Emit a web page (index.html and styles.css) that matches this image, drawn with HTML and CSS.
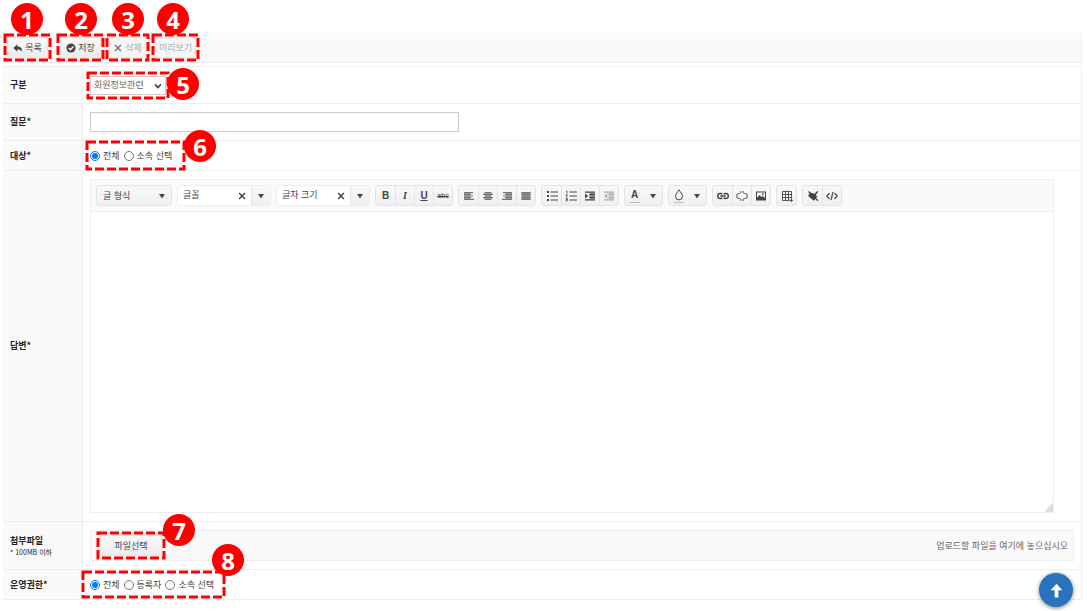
FILE: index.html
```html
<!DOCTYPE html>
<html lang="ko">
<head>
<meta charset="utf-8">
<meta name="viewport" content="width=device-width, initial-scale=1">
<title>FAQ 등록</title>
<link rel="stylesheet" href="styles.css">
</head>
<body>
<svg class="sprite" aria-hidden="true">
  <symbol id="i-reply" viewBox="0 0 12 12"><path d="M5.2 1.5v2.6C9 4.2 11 6 11 10.400 9.800 8.300 8 7.700 5.200 7.700v2.700L.5 6z"/></symbol>
  <symbol id="i-check" viewBox="0 0 12 12"><circle cx="6" cy="6" r="5.500"/><path d="M3.200 6.100l2 2 3.800-3.900" fill="none" stroke="#fff" stroke-width="1.700"/></symbol>
  <symbol id="i-x" viewBox="0 0 12 12"><path d="M2.500 2.500l7 7M9.500 2.500l-7 7" fill="none" stroke="currentColor" stroke-width="1.800"/></symbol>
  <symbol id="i-caret" viewBox="0 0 12 12"><path d="M2.500 3.500h7L6 9z"/></symbol>
  <symbol id="i-chevron" viewBox="0 0 12 12"><path d="M2.500 4L6 7.800 9.500 4" fill="none" stroke="currentColor" stroke-width="2"/></symbol>
  <symbol id="i-left" viewBox="0 0 12 12"><path d="M1 2h9v1.200H1zM1 3.700h7v1.200H1zM1 5.400h9v1.200H1zM1 7.100h7v1.200H1zM1 8.800h10V10H1z"/><path d="M1 2h6v8H1z" opacity=".5"/></symbol>
  <symbol id="i-center" viewBox="0 0 12 12"><path d="M2.500 2h7v1.200h-7zM1 3.700h10v1.200H1zM2.500 5.400h7v1.200h-7zM1 7.100h10v1.200H1zM2.500 8.800h7V10h-7z"/><path d="M3 2h6v8H3z" opacity=".5"/></symbol>
  <symbol id="i-right" viewBox="0 0 12 12"><path d="M2 2h9v1.200H2zM4 3.700h7v1.200H4zM2 5.400h9v1.200H2zM4 7.100h7v1.200H4zM1 8.800h10V10H1z"/><path d="M5 2h6v8H5z" opacity=".5"/></symbol>
  <symbol id="i-full" viewBox="0 0 12 12"><path d="M1.500 2h9v1.200h-9zM1.500 3.700h9v1.200h-9zM1.500 5.400h9v1.200h-9zM1.500 7.100h9v1.200h-9zM1.500 8.800h9V10h-9z"/><path d="M1.500 2h9v8h-9z" opacity=".6"/></symbol>
  <symbol id="i-ul" viewBox="0 0 12 12"><path d="M1 1h2v2H1zM1 5h2v2H1zM1 9h2v2H1zM4.500 1.500H12v1H4.500zM4.500 5.500H12v1H4.500zM4.500 9.500H12v1H4.500z"/></symbol>
  <symbol id="i-ol" viewBox="0 0 12 12"><path d="M4.500 1.500H12v1H4.500zM4.500 5.500H12v1H4.500zM4.500 9.500H12v1H4.500z"/><path d="M1 1h1v2.500M.7 4.700h1.600L1 6.900h1.500M.7 8.500h1.600v1H1.200h1.100v1.300H.7" fill="none" stroke="currentColor" stroke-width=".8"/></symbol>
  <symbol id="i-indent" viewBox="0 0 12 12"><path d="M1 1.500h10v1.300H1zM1 9.200h10v1.300H1zM1 3.500L4.300 6 1 8.500z"/><path d="M5.500 2.800H11v6.400H5.500z" opacity=".6"/><path d="M5.500 4h5.500v1H5.500zM5.500 7h5.500v1H5.500z"/></symbol>
  <symbol id="i-outdent" viewBox="0 0 12 12"><path d="M1 1.500h10v1.300H1zM1 9.200h10v1.300H1zM4.300 3.500L1 6l3.300 2.500z"/><path d="M5.500 2.800H11v6.400H5.500z" opacity=".5"/><path d="M5.500 4h5.500v1H5.500zM5.500 7h5.500v1H5.500z"/></symbol>
  <symbol id="i-drop" viewBox="0 0 12 12"><path d="M6 .8C4.500 3.100 2.500 5 2.500 7.400a3.500 3.500 0 007 0C9.500 5 7.500 3.100 6 .8z" fill="none" stroke="currentColor"/></symbol>
  <symbol id="i-link" viewBox="0 0 12 12"><path d="M5.300 4.200A2 2 0 003.700 3.500H3a2.300 2.500 0 000 5h.7a2 2 0 001.600-.7M6.700 4.200a2 2 0 011.600-.7H9a2.300 2.500 0 010 5h-.7a2 2 0 01-1.600-.7M3.300 6h5.400" fill="none" stroke="currentColor" stroke-width="1.500"/></symbol>
  <symbol id="i-unlink" viewBox="0 0 12 12"><path d="M4.500 3.500H3a2.300 2.500 0 000 5h1.500M7.500 3.500H9a2.300 2.500 0 010 5H7.500M4.800 3V1M7.200 3V1M4.800 11V9M7.200 11V9" fill="none" stroke="currentColor" stroke-width="1.200"/></symbol>
  <symbol id="i-image" viewBox="0 0 12 12"><path fill-rule="evenodd" d="M1 1.500h10v9H1zM2 2.500v5.300L4.600 5l1.900 2 1.300-1L10 8V2.500z"/><circle cx="8" cy="4.100" r=".9"/></symbol>
  <symbol id="i-table" viewBox="0 0 12 12"><path d="M1.500 1.500h9v9h-9zM4.500 1.500v9M7.500 1.500v9M1.500 4.500h9M1.500 7.500h9" fill="none" stroke="currentColor" stroke-width=".9"/><path d="M8.500 8.500H12V12H8.500z" fill="#f4f4f4"/><path d="M10.300 8.600V12M8.600 10.300H12" stroke="currentColor"/></symbol>
  <symbol id="i-clean" viewBox="0 0 12 12"><path d="M7 4.200L10.300 1l1 .8L8.700 5l1.600 1.500-3.600 4.300L3 7.500 1.200 6z"/><path d="M1.200 5L3.500 2.500 8 4 4 8z"/><path d="M1.500 1.500l9.500 9.300" stroke="currentColor" stroke-width="1.200"/></symbol>
  <symbol id="i-code" viewBox="0 0 12 12"><path d="M3.500 3L.7 6l2.800 3M8.500 3l2.800 3-2.800 3M7 2L5 10" fill="none" stroke="currentColor" stroke-width="1.100"/></symbol>
  <symbol id="i-up" viewBox="0 0 12 12"><path d="M6 .5L10.700 5.700H7.500v5.800h-3V5.700H1.300z"/></symbol>
</svg>

<header class="toolbar">
  <div class="callout callout-main"><button class="btn" type="button"><svg class="icon"><use href="#i-reply"/></svg>목록</button><svg class="frame"><rect/></svg><span class="badge above">1</span></div>
  <div class="callout callout-main save"><button class="btn" type="button"><svg class="icon"><use href="#i-check"/></svg>저장</button><svg class="frame"><rect/></svg><span class="badge above">2</span></div>
  <div class="callout callout-main delete"><button class="btn dim" type="button"><svg class="icon"><use href="#i-x"/></svg>삭제</button><svg class="frame"><rect/></svg><span class="badge above">3</span></div>
  <div class="callout callout-main preview"><button class="btn dim" type="button">미리보기</button><svg class="frame"><rect/></svg><span class="badge above">4</span></div>
</header>

<form class="form">
  <div class="row tall">
    <label class="label" for="kind">구분</label>
    <div class="cell"><div class="callout kind"><select id="kind" class="select"><option>회원정보관련</option></select><svg class="icon chevron"><use href="#i-chevron"/></svg><svg class="frame"><rect/></svg><span class="badge beside">5</span></div></div>
  </div>
  <div class="row tall">
    <label class="label" for="question">질문*</label>
    <div class="cell inset"><input id="question" class="text" type="text"></div>
  </div>
  <div class="row">
    <div class="label" id="target">대상*</div>
    <div class="cell"><div class="callout radios target" role="radiogroup" aria-labelledby="target">
      <label class="option"><input type="radio" name="target" checked>전체</label>
      <label class="option"><input type="radio" name="target">소속 선택</label>
      <svg class="frame"><rect/></svg><span class="badge corner">6</span></div></div>
  </div>
  <div class="row">
    <label class="label" for="answer">답변*</label>
    <div class="cell inset editor-cell">
      <div class="editor">
        <div class="tools">
          <button class="group format" type="button">글 형식<svg class="icon"><use href="#i-caret"/></svg></button>
          <div class="group combo"><span class="value">글꼴</span><button class="tool clear" type="button" aria-label="지우기"><svg class="icon"><use href="#i-x"/></svg></button><button class="tool" type="button" aria-label="글꼴 열기"><svg class="icon"><use href="#i-caret"/></svg></button></div>
          <div class="group combo"><span class="value">글자 크기</span><button class="tool clear" type="button" aria-label="지우기"><svg class="icon"><use href="#i-x"/></svg></button><button class="tool" type="button" aria-label="크기 열기"><svg class="icon"><use href="#i-caret"/></svg></button></div>
          <div class="group"><button class="tool letter" type="button">B</button><button class="tool letter italic" type="button">I</button><button class="tool letter underline" type="button">U</button><button class="tool strike" type="button">abc</button></div>
          <div class="group gray"><button class="tool" type="button" aria-label="왼쪽"><svg class="icon"><use href="#i-left"/></svg></button><button class="tool" type="button" aria-label="가운데"><svg class="icon"><use href="#i-center"/></svg></button><button class="tool" type="button" aria-label="오른쪽"><svg class="icon"><use href="#i-right"/></svg></button><button class="tool" type="button" aria-label="양쪽"><svg class="icon"><use href="#i-full"/></svg></button></div>
          <div class="group"><button class="tool" type="button" aria-label="목록"><svg class="icon"><use href="#i-ul"/></svg></button><button class="tool" type="button" aria-label="번호 목록"><svg class="icon"><use href="#i-ol"/></svg></button><button class="tool" type="button" aria-label="들여쓰기"><svg class="icon"><use href="#i-indent"/></svg></button><button class="tool faded" type="button" aria-label="내어쓰기"><svg class="icon"><use href="#i-outdent"/></svg></button></div>
          <div class="group plain"><button class="tool letter" type="button"><span class="swatch">A</span></button><button class="tool" type="button" aria-label="글자색"><svg class="icon caret"><use href="#i-caret"/></svg></button></div>
          <div class="group plain"><button class="tool" type="button" aria-label="배경색"><span class="swatch"><svg class="icon"><use href="#i-drop"/></svg></span></button><button class="tool" type="button" aria-label="배경색 열기"><svg class="icon caret"><use href="#i-caret"/></svg></button></div>
          <div class="group"><button class="tool" type="button" aria-label="링크"><svg class="icon"><use href="#i-link"/></svg></button><button class="tool mid" type="button" aria-label="링크 제거"><svg class="icon"><use href="#i-unlink"/></svg></button><button class="tool" type="button" aria-label="이미지"><svg class="icon"><use href="#i-image"/></svg></button></div>
          <div class="group"><button class="tool" type="button" aria-label="표"><svg class="icon"><use href="#i-table"/></svg></button></div>
          <div class="group"><button class="tool" type="button" aria-label="서식 지우기"><svg class="icon"><use href="#i-clean"/></svg></button><button class="tool" type="button" aria-label="HTML"><svg class="icon"><use href="#i-code"/></svg></button></div>
        </div>
        <textarea id="answer" class="area"></textarea>
        <span class="grip"></span>
      </div>
    </div>
  </div>
  <div class="row">
    <div class="label">첨부파일<small class="hint">* 100MB 이하</small></div>
    <div class="cell inset file-cell">
      <div class="upload">
        <div class="callout file"><button class="btn file-btn" type="button">파일선택</button><svg class="frame"><rect/></svg><span class="badge over">7</span></div>
        <span class="drop-text">업로드할 파일을 여기에 놓으십시오</span>
      </div>
    </div>
  </div>
  <div class="row">
    <div class="label" id="rights">운영권한*</div>
    <div class="cell"><div class="callout radios rights" role="radiogroup" aria-labelledby="rights">
      <label class="option"><input type="radio" name="rights" checked>전체</label>
      <label class="option"><input type="radio" name="rights">등록자</label>
      <label class="option"><input type="radio" name="rights">소속 선택</label>
      <svg class="frame"><rect/></svg><span class="badge over">8</span></div></div>
  </div>
</form>
<button class="to-top" type="button" aria-label="맨 위로"><svg class="icon"><use href="#i-up"/></svg></button>
</body>
</html>
```
FILE: styles.css
```css
* { box-sizing: border-box; }

body {
  margin: 0;
  padding: 33px 5px 8px 3px;
  background: #fff;
  color: #444;
  font: 9px/12px "Noto Sans CJK KR", sans-serif;
}

button, input, select, textarea { margin: 0; font: inherit; color: inherit; }
button { padding: 0; border: 0; background: none; white-space: nowrap; }

.sprite { display: none; }
.icon { width: 10px; height: 10px; fill: currentColor; flex: none; }

.toolbar {
  display: flex;
  padding: 1px;
  background: #fafafa;
  border: solid #eee;
  border-width: 0 1px 1px 0;
}

/* Numbered callouts */
.callout { position: relative; display: flex; }
.frame {
  position: absolute;
  inset: 0;
  width: 100%;
  height: 100%;
  overflow: visible;
  pointer-events: none;
}
.frame rect {
  x: 1px;
  y: 1px;
  width: calc(100% - 2px);
  height: calc(100% - 2px);
  fill: none;
  stroke: #f00;
  stroke-width: 3px;
  stroke-dasharray: 9px 3px;
}
.badge {
  position: absolute;
  z-index: 2;
  width: 32px;
  height: 32px;
  border-radius: 50%;
  background: #f00;
  color: #fff;
  font: bold 24px/34px "Noto Sans", sans-serif;
  text-align: center;
}
.above { top: -31px; left: 7px; }
.beside { top: -4px; right: -30px; }
.corner { top: -11px; right: -31px; }
.over { top: -18px; right: -30px; }
.rights .over { top: -27px; right: -19px; }

.callout-main { width: 47px; height: 27px; padding: 3px; }
.save { margin-left: 6px; }
.save .badge { left: 8px; }
.delete { width: 43px; margin-left: 2px; }
.delete .badge { left: 6px; }
.preview { margin-left: 3px; }
.preview .badge { left: 5px; }

.btn {
  flex: 1;
  display: flex;
  align-items: center;
  justify-content: center;
  gap: 2px;
  border: 1px solid #e6e6e6;
  background: linear-gradient(#fafafa, #ececec);
}
.dim { color: #aaa; background: #f7f7f7; }
.dim .icon { color: #777; }

/* Form rows */
.form {
  margin-top: 3px;
  border: solid #eee;
  border-width: 1px 1px 0 0;
}
.row {
  display: grid;
  grid-template-columns: 80px minmax(0, 1fr);
  min-height: 30px;
  border-bottom: 1px solid #eee;
}
.tall { min-height: 37px; }
.label {
  display: flex;
  flex-direction: column;
  justify-content: center;
  padding-left: 7px;
  background: #fafafa;
  border-right: 1px solid #eee;
  color: #222;
  font-weight: bold;
}
.hint { font-size: 7px; line-height: 10px; font-weight: normal; }
.cell { display: flex; align-items: center; }
.inset { padding-left: 7px; }

.kind { width: 82px; height: 27px; margin-left: 4px; padding: 4px 3px; }
.select {
  width: 100%;
  padding: 0 3px;
  border: 1px solid #ccc;
  border-radius: 0;
  background: #fff;
  color: #666;
  appearance: none;
}
.chevron { position: absolute; top: 9px; right: 6px; pointer-events: none; }
.text {
  width: 100%;
  max-width: 369px;
  height: 20px;
  padding: 0 4px;
  border: 1px solid #ccc;
}

.radios { height: 29px; align-items: center; gap: 4px; padding-left: 4px; }
.target { width: 99px; margin-left: 3px; }
.rights { width: 143px; height: 27px; margin-left: -1px; padding-left: 8px; }
.option { display: flex; align-items: center; gap: 3px; white-space: nowrap; }
.option input { width: 10px; height: 10px; }

/* Editor */
.editor-cell { padding: 8px 27px 8px 7px; }
.editor { position: relative; flex: 1; min-width: 0; border: 1px solid #eee; }
.tools {
  display: flex;
  flex-wrap: wrap;
  gap: 5px;
  padding: 5px;
  background: #fafafa;
  border-bottom: 1px solid #eee;
}
.group {
  display: flex;
  height: 21px;
  border: 1px solid #e4e4e4;
  border-radius: 3px;
  background: linear-gradient(#f8f8f8, #f0f0f0);
}
.format {
  width: 76px;
  align-items: center;
  justify-content: space-between;
  padding: 0 4px 0 6px;
}
.combo { width: 94px; overflow: hidden; border-color: #eee; }
.value { flex: 1; padding: 3px 5px; background: #fff; }
.tool {
  width: 19px;
  display: flex;
  align-items: center;
  justify-content: center;
}
.tool .icon { width: 12px; height: 12px; }
.tool .caret, .combo .icon { width: 10px; height: 10px; }
.tool + .tool { border-left: 1px solid #e4e4e4; }
.plain .tool + .tool { width: 18px; border-left: 0; }
.combo .clear { width: 18px; background: #fff; }
.letter { font: bold 10px/12px "Liberation Sans", sans-serif; }
.italic { font-family: "Liberation Serif", serif; font-style: italic; }
.underline { text-decoration: underline; }
.strike { font: 7px/12px "Liberation Sans", sans-serif; text-decoration: line-through; }
.gray { color: #777; }
.faded { color: #aaa; }
.mid { color: #777; }
.swatch { display: flex; justify-content: center; width: 10px; height: 14px; border-bottom: 1px solid #bbb; }
.area {
  display: block;
  width: 100%;
  height: 300px;
  padding: 8px;
  border: 0;
  outline: 0;
  resize: none;
}
.grip {
  position: absolute;
  right: 0;
  bottom: 0;
  width: 9px;
  height: 9px;
  background: linear-gradient(135deg, transparent 50%, #ddd 50%);
}

/* Upload */
.file-cell { padding: 8px 7px 8px 7px; }
.upload {
  flex: 1;
  display: flex;
  align-items: center;
  justify-content: space-between;
  padding: 1px 5px 1px 6px;
  border: 1px solid #eee;
  background: #fafafa;
}
.file { width: 68px; height: 27px; padding: 3px; }
.drop-text { color: #666; }

.to-top {
  position: fixed;
  right: 14px;
  bottom: 4px;
  display: flex;
  align-items: center;
  justify-content: center;
  width: 34px;
  height: 34px;
  border-radius: 50%;
  background: #2873bb;
  color: #fff;
  box-shadow: 0 1px 4px rgba(0, 0, 0, .5);
}
.to-top .icon { width: 15px; height: 15px; }
```
